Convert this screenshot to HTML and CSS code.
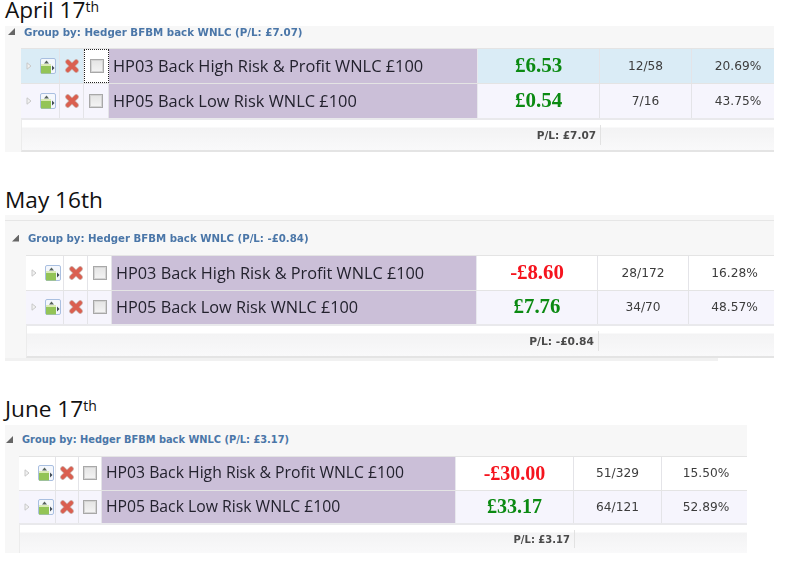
FILE: index.html
```html
<!DOCTYPE html>
<html lang="en">
<head>
<meta charset="utf-8">
<title>Hedger results</title>
<link rel="stylesheet" href="styles.css">
</head>
<body>
<svg class="defs" width="0" height="0" aria-hidden="true">
  <symbol id="i-exp" viewBox="0 0 6 8"><path d="M1 .8 5 4 1 7.2Z" fill="#f2f2f2" stroke="#c8c8c8"/></symbol>
  <symbol id="i-doc" viewBox="0 0 16 16">
    <rect x=".5" y=".5" width="15" height="15" rx="1.5" fill="#f4f7fc" stroke="#a9bfe0"/>
    <path d="M4 5.5 6.5 2.5 9 5.5Z" fill="#56625a"/>
    <rect x="1" y="6" width="10" height="2" fill="#dcebb8"/>
    <rect x="1" y="8" width="10" height="7.5" fill="#93c457"/>
    <path d="M12 7.5 14.5 10 12 12.5Z" fill="#3f4a55"/>
  </symbol>
  <symbol id="i-x" viewBox="0 0 14 14">
    <path d="M2.8 2.8 11.2 11.2M11.2 2.8 2.8 11.2" stroke="#cdb0aa" stroke-width="5.2" stroke-linecap="round"/>
    <path d="M2.8 2.8 11.2 11.2M11.2 2.8 2.8 11.2" stroke="#da5f50" stroke-width="3.8" stroke-linecap="round"/>
  </symbol>
</svg>

<section class="report report-a">
  <h2 class="date">April 17<sup>th</sup></h2>
  <div class="panel">
    <div class="group"><span class="tri"></span><span class="glabel">Group by: Hedger BFBM back WNLC (P/L: £7.07)</span></div>
    <div class="row selected">
      <div class="cell c-icons"><svg class="exp"><use href="#i-exp"/></svg><svg class="doc"><use href="#i-doc"/></svg></div>
      <div class="cell"><svg class="x"><use href="#i-x"/></svg></div>
      <div class="cell focus"><span class="check"></span></div>
      <div class="cell name">HP03 Back High Risk &amp; Profit WNLC £100</div>
      <div class="cell pl win">£6.53</div>
      <div class="cell num">12/58</div>
      <div class="cell num">20.69%</div>
    </div>
    <div class="row alt">
      <div class="cell c-icons"><svg class="exp"><use href="#i-exp"/></svg><svg class="doc"><use href="#i-doc"/></svg></div>
      <div class="cell"><svg class="x"><use href="#i-x"/></svg></div>
      <div class="cell"><span class="check"></span></div>
      <div class="cell name">HP05 Back Low Risk WNLC £100</div>
      <div class="cell pl win">£0.54</div>
      <div class="cell num">7/16</div>
      <div class="cell num">43.75%</div>
    </div>
    <div class="foot"><div class="ftotal">P/L: £7.07</div></div>
  </div>
</section>

<section class="report report-b">
  <h2 class="date">May 16th</h2>
  <div class="panel">
    <div class="group"><span class="tri"></span><span class="glabel">Group by: Hedger BFBM back WNLC (P/L: -£0.84)</span></div>
    <div class="row">
      <div class="cell c-icons"><svg class="exp"><use href="#i-exp"/></svg><svg class="doc"><use href="#i-doc"/></svg></div>
      <div class="cell"><svg class="x"><use href="#i-x"/></svg></div>
      <div class="cell"><span class="check"></span></div>
      <div class="cell name">HP03 Back High Risk &amp; Profit WNLC £100</div>
      <div class="cell pl loss">-£8.60</div>
      <div class="cell num">28/172</div>
      <div class="cell num">16.28%</div>
    </div>
    <div class="row alt">
      <div class="cell c-icons"><svg class="exp"><use href="#i-exp"/></svg><svg class="doc"><use href="#i-doc"/></svg></div>
      <div class="cell"><svg class="x"><use href="#i-x"/></svg></div>
      <div class="cell"><span class="check"></span></div>
      <div class="cell name">HP05 Back Low Risk WNLC £100</div>
      <div class="cell pl win">£7.76</div>
      <div class="cell num">34/70</div>
      <div class="cell num">48.57%</div>
    </div>
    <div class="foot"><div class="ftotal">P/L: -£0.84</div></div>
    <div class="tail"></div>
  </div>
</section>

<section class="report report-c">
  <h2 class="date">June 17<sup>th</sup></h2>
  <div class="panel">
    <div class="group"><span class="tri"></span><span class="glabel">Group by: Hedger BFBM back WNLC (P/L: £3.17)</span></div>
    <div class="row">
      <div class="cell c-icons"><svg class="exp"><use href="#i-exp"/></svg><svg class="doc"><use href="#i-doc"/></svg></div>
      <div class="cell"><svg class="x"><use href="#i-x"/></svg></div>
      <div class="cell"><span class="check"></span></div>
      <div class="cell name">HP03 Back High Risk &amp; Profit WNLC £100</div>
      <div class="cell pl loss">-£30.00</div>
      <div class="cell num">51/329</div>
      <div class="cell num">15.50%</div>
    </div>
    <div class="row alt">
      <div class="cell c-icons"><svg class="exp"><use href="#i-exp"/></svg><svg class="doc"><use href="#i-doc"/></svg></div>
      <div class="cell"><svg class="x"><use href="#i-x"/></svg></div>
      <div class="cell"><span class="check"></span></div>
      <div class="cell name">HP05 Back Low Risk WNLC £100</div>
      <div class="cell pl win">£33.17</div>
      <div class="cell num">64/121</div>
      <div class="cell num">52.89%</div>
    </div>
    <div class="foot"><div class="ftotal">P/L: £3.17</div></div>
  </div>
</section>
</body>
</html>
```
FILE: styles.css
```css
* { box-sizing: border-box; }
html, body { margin: 0; padding: 0; background: #fff; }
body { width: 786px; height: 564px; overflow: hidden; font-family: "DejaVu Sans", sans-serif; }
.defs { position: absolute; }

.report { padding-left: 5px; }
.report-a { --cols: 39px 24px 25px 369px 122px 92px 82px; --inset: 16px; --w: 769px; --rowh: 35px; --name: 16.4px; --gfont: 10.27px; --pl: 21px; --foot: 10.5px; --footh: 34px; --lastpad: 10px; }
.report-b { --cols: 38px 24px 24px 365px 121px 91px 85px; --inset: 21px; --w: 769px; --rowh: 34.5px; --name: 16.3px; --gfont: 10.2px; --pl: 20.8px; --foot: 10.7px; --footh: 34px; --lastpad: 6px; margin-top: 38px; }
.report-c { --cols: 37px 23px 23px 354px 118px 88px 86px; --inset: 14px; --w: 742px; --rowh: 33.5px; --name: 15.75px; --gfont: 9.85px; --pl: 20px; --foot: 10px; --footh: 30px; --lastpad: 2px; margin-top: 38px; }

.date {
  margin: 0 0 5px;
  font: 400 22.6px/20px "Open Sans", sans-serif;
  color: #111;
}
.report-a .date, .report-c .date { margin-bottom: 6px; }
.date sup { font-size: 14px; line-height: 0; vertical-align: 6px; }

.panel { width: var(--w); background: linear-gradient(#f7f7f7, #f7f7f7) no-repeat; filter: blur(.35px); }
.report-b .panel { background-size: 100% calc(100% - 3px); padding-top: 5px; }

.group {
  display: flex;
  align-items: center;
  color: #4a76a8;
  font-size: var(--gfont);
  font-weight: 700;
}
.report-a .group { height: 22px; padding: 0 0 11px 3px; gap: 9px; }
.report-b .group { height: 35px; padding: 0 0 0 7px; gap: 9px; border-top: 1px solid #e6e6e6; }
.report-c .group { height: 31px; padding: 0 0 2px 1px; gap: 9px; }
.tri {
  width: 7px; height: 7px; flex: none;
  background: #666;
  clip-path: polygon(100% 0, 100% 100%, 0 100%);
}

.row {
  margin-left: var(--inset);
  height: var(--rowh);
  display: grid;
  grid-template-columns: var(--cols);
  background: #fff;
  border-top: 1px solid #e4e4e4;
}
.row.selected { background: #daecf6; }
.row.alt { background: #f6f5fd; }

.cell {
  display: flex;
  align-items: center;
  justify-content: center;
  border-right: 1px solid #e4e4e8;
  color: #333;
  min-width: 0;
}
.cell:last-child { border-right: 0; padding-left: var(--lastpad); }
.c-icons { justify-content: flex-start; padding-left: 5px; gap: 8px; }
.exp { width: 6px; height: 8px; }
.doc { width: 16px; height: 16px; }
.x { width: 14px; height: 14px; }
.check {
  width: 14px; height: 14px;
  border: 1px solid #a8a8a8;
  background: linear-gradient(#e4e4e4, #f4f4f4);
  box-shadow: inset 0 0 0 1px #d4d4d4;
}
.focus { background: #fff; outline: 1px dotted #222; outline-offset: -1px; border-right: 0; }
.name {
  justify-content: flex-start;
  padding-left: 4px;
  background: #cbbfd8;
  border-right: 1px solid #e8e8ee;
  font: 400 var(--name)/1 "Open Sans", sans-serif;
  color: #23222e;
  white-space: nowrap;
}
.pl { font: 700 var(--pl)/1 "Liberation Serif", serif; padding-bottom: 1px; }
.win { color: #0b8a12; }
.loss { color: #f5141e; }
.num { font-size: 12.2px; color: #3c3c3c; }

.foot {
  margin-left: var(--inset);
  height: var(--footh);
  border-top: 2px solid #e9e9ec;
  border-left: 1px solid #ececec;
  border-bottom: 2px solid #e4e4e4;
  background: linear-gradient(#fff 0 7px, #f3f3f4 8px, #f9f9fa);
  display: grid;
  grid-template-columns: var(--cols);
}
.report-c .foot { border-bottom: 0; }
.ftotal {
  grid-column: 1 / 6;
  display: flex;
  align-items: center;
  justify-content: flex-end;
  padding: 0 4px 0 0;
  margin: 5px 0;
  border-right: 1px solid #e2e2e2;
  font-size: var(--foot);
  font-weight: 700;
  color: #4a4a4a;
}
.tail { height: 3px; width: 713px; background: #f1f1f1; }
```
